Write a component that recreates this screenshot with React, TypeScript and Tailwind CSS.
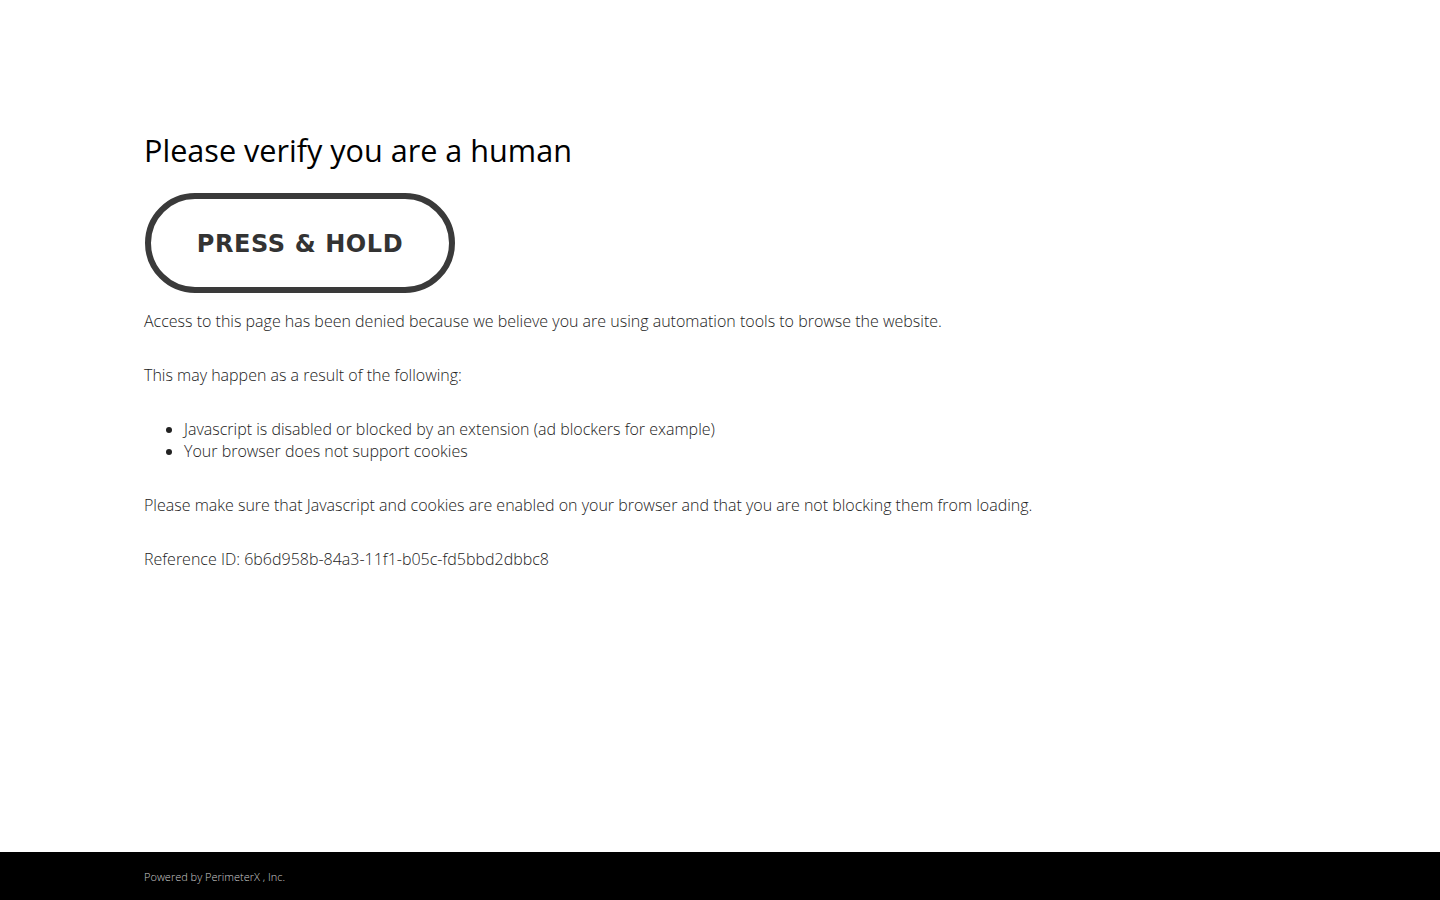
export default function App() {
  return (
    <div className="flex min-h-screen flex-col bg-white font-['Open_Sans',sans-serif]">
      {/* Main */}
      <main className="flex-1 px-[144px] pt-[131px]">
        <h1 className="text-[30.6px] leading-[38px] font-normal text-black">
          Please verify you are a human
        </h1>

        <div className="mt-[24px] ml-[1px] flex h-[100px] w-[310px] items-center justify-center rounded-full border-[6px] border-[#3a3a3a] bg-white">
          <span className="mt-[1px] font-['DejaVu_Sans',sans-serif] text-[24px] font-bold tracking-[0.6px] text-[#333]">
            PRESS &amp; HOLD
          </span>
        </div>

        <div className="mt-[17px] text-[16px] leading-[22px] font-light text-[#222]">
          <p>
            Access to this page has been denied because we believe you are using automation tools to browse the website.
          </p>
          <p className="mt-[32px]">This may happen as a result of the following:</p>
          <ul className="mt-[32px] list-disc pl-[40px]">
            <li>Javascript is disabled or blocked by an extension (ad blockers for example)</li>
            <li>Your browser does not support cookies</li>
          </ul>
          <p className="mt-[32px]">
            Please make sure that Javascript and cookies are enabled on your browser and that you are not blocking them from loading.
          </p>
          <p className="mt-[32px]">Reference ID: 6b6d958b-84a3-11f1-b05c-fd5bbd2dbbc8</p>
        </div>
      </main>

      {/* Footer */}
      <footer className="flex h-[48px] items-center bg-black px-[144px]">
        <span className="mt-[2px] text-[11px] font-light text-[#ccc]">Powered by PerimeterX , Inc.</span>
      </footer>
    </div>
  );
}
